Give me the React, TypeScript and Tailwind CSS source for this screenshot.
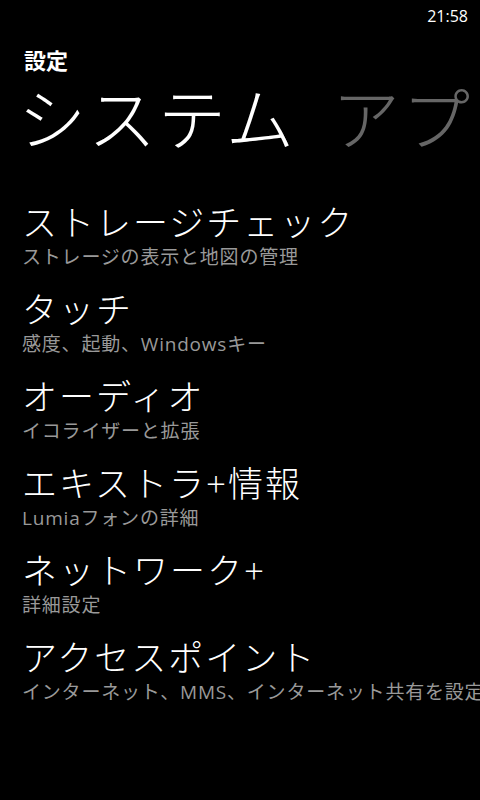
const ITEMS = [
	{ title: "ストレージチェック", sub: "ストレージの表示と地図の管理" },
	{ title: "タッチ", sub: "感度、起動、Windowsキー" },
	{ title: "オーディオ", sub: "イコライザーと拡張" },
	{ title: "エキストラ+情報", sub: "Lumiaフォンの詳細" },
	{ title: "ネットワーク+", sub: "詳細設定" },
	{ title: "アクセスポイント", sub: "インターネット、MMS、インターネット共有を設定" },
];

export default function App() {
	return (
		<div className="w-[480px] h-[800px] bg-black text-white overflow-hidden font-['Open_Sans','Noto_Sans_CJK_JP',sans-serif]">
			<div className="h-[32px] flex items-center justify-end pr-[12px]">
				<span className="text-[16px] text-white">21:58</span>
			</div>
			<div className="pl-[24px] pt-[14px]">
				<h2 className="text-[22px] leading-[28px] font-bold">設定</h2>
			</div>
			<div className="flex gap-[36px] whitespace-nowrap pl-[18px] mt-[5px]">
				<span className="text-[68px] leading-[80px] font-light tracking-[2px]">システム</span>
				<span className="text-[68px] leading-[80px] font-light text-[#666666] tracking-[2px]">アプリ</span>
			</div>
			<ul className="pl-[22px] mt-[42px] flex flex-col gap-[19px]">
				{ITEMS.map((item) => (
					<li key={item.title} className="whitespace-nowrap">
						<p className="text-[35px] leading-[44px] font-light tracking-[2px]">{item.title}</p>
						<p className="text-[19px] leading-[24px] text-[#999999] tracking-[0.8px]">{item.sub}</p>
					</li>
				))}
			</ul>
		</div>
	);
}
